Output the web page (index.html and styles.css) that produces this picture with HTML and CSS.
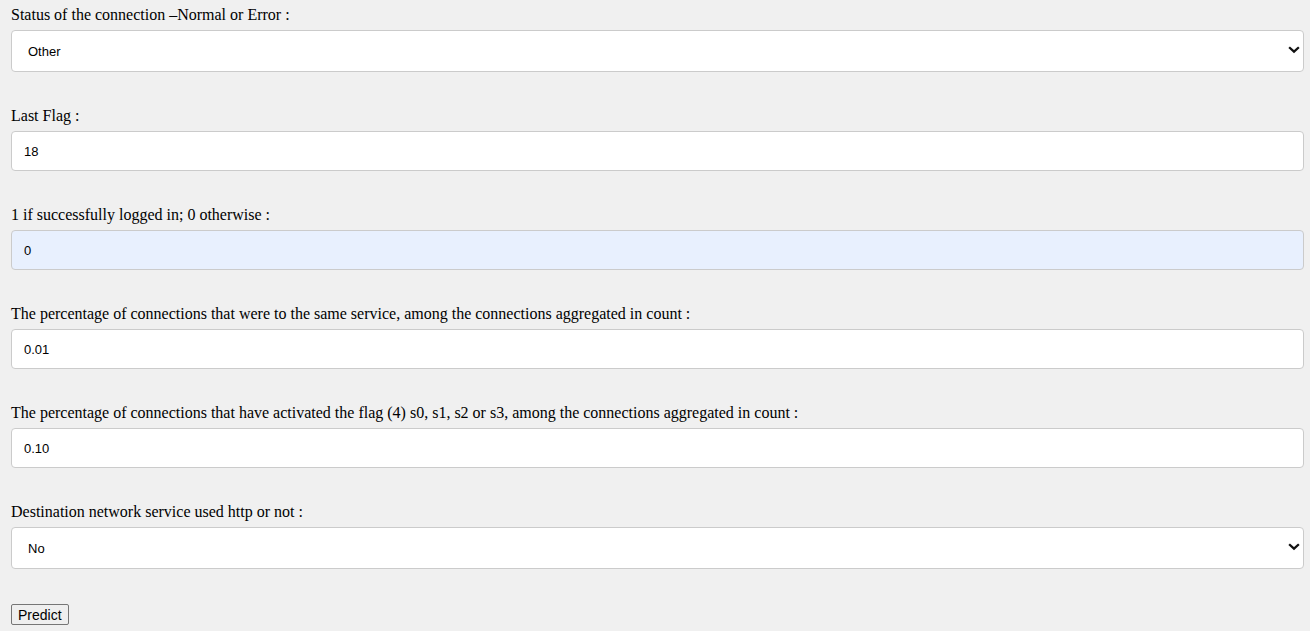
FILE: index.html
```html
<!DOCTYPE html>
<html>
<head>
<meta charset="utf-8">
<link rel="stylesheet" href="styles.css">
</head>
<body>
<form class="form">
  <label class="label" for="f1">Status of the connection –Normal or Error :</label>
  <div class="select-wrap">
    <select id="f1" class="field select">
      <option>Other</option>
      <option>Normal</option>
      <option>Error</option>
    </select>
    <svg class="chev" width="12" height="8" viewBox="0 0 12 8"><path d="M2 2 L6 5.6 L10 2" fill="none" stroke="#111" stroke-width="2.3" stroke-linecap="square"/></svg>
  </div>

  <label class="label" for="f2">Last Flag :</label>
  <input id="f2" class="field input" type="text" value="18">

  <label class="label" for="f3">1 if successfully logged in; 0 otherwise :</label>
  <input id="f3" class="field input autofill" type="text" value="0">

  <label class="label" for="f4">The percentage of connections that were to the same service, among the connections aggregated in count :</label>
  <input id="f4" class="field input" type="text" value="0.01">

  <label class="label" for="f5">The percentage of connections that have activated the flag (4) s0, s1, s2 or s3, among the connections aggregated in count :</label>
  <input id="f5" class="field input" type="text" value="0.10">

  <label class="label" for="f6">Destination network service used http or not :</label>
  <div class="select-wrap">
    <select id="f6" class="field select">
      <option>No</option>
      <option>Yes</option>
    </select>
    <svg class="chev" width="12" height="8" viewBox="0 0 12 8"><path d="M2 2 L6 5.6 L10 2" fill="none" stroke="#111" stroke-width="2.3" stroke-linecap="square"/></svg>
  </div>

  <button type="button" class="btn">Predict</button>
</form>
</body>
</html>
```
FILE: styles.css
```css
html, body {
  margin: 0;
  padding: 0;
  background: #f0f0f0;
}
body {
  font-family: "Liberation Serif", "Times New Roman", serif;
  font-size: 16px;
  color: #000;
}
.form {
  display: flex;
  flex-direction: column;
  align-items: flex-start;
  padding: 6px 6px 0 11px;
}
.label {
  display: block;
  line-height: 18px;
  margin-bottom: 6px;
}
.field {
  box-sizing: border-box;
  width: 1293px;
  border: 1px solid #cbcbcb;
  border-radius: 4px;
  background: #fff;
  font-family: "Liberation Sans", Arial, sans-serif;
  font-size: 13px;
  color: #000;
  margin: 0 0 35px 0;
  outline: none;
}
.input {
  height: 40px;
  padding: 0 12px;
}
.autofill {
  background: #e8f0fe;
}
.select-wrap {
  position: relative;
  width: 1293px;
}
.select {
  display: block;
  height: 42px;
  padding: 0 16px;
  appearance: none;
  -webkit-appearance: none;
}
.chev {
  position: absolute;
  right: 4px;
  top: 16px;
  pointer-events: none;
}
.btn {
  font-family: "Liberation Sans", Arial, sans-serif;
  font-size: 14px;
  height: 21px;
  padding: 0 6px;
  border: 1px solid #767676;
  border-radius: 2px;
  background: #efefef;
  color: #000;
  margin-top: 0;
}
```
